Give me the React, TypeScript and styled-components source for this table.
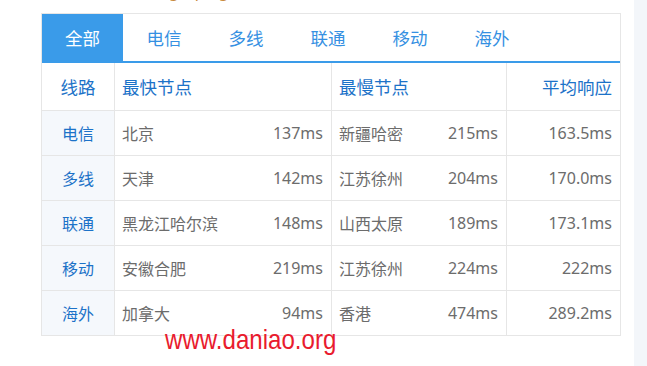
import React from 'react';
import styled, {createGlobalStyle} from 'styled-components';

const GlobalStyle = createGlobalStyle`
  html, body {
    margin: 0;
    padding: 0;
    background: #fff;
    overflow: hidden;
  }
  body {
    font-family: "Noto Sans", "Noto Sans CJK SC", sans-serif;
  }
`;

const Page = styled.div`
  display: flex;
  width: 647px;
  height: 366px;
  position: relative;
`;

const Main = styled.div`
  width: 634px;
  padding-left: 41px;
  box-sizing: border-box;
`;

const SideStrip = styled.div`
  flex: 1;
  background: #f3f6fa;
`;

const NoticeClip = styled.div`
  height: 13px;
  overflow: hidden;
  position: relative;
`;

const NoticeText = styled.div`
  position: absolute;
  left: 128px;
  top: -19px;
  font-size: 16px;
  line-height: 20px;
  color: #c8893c;
  white-space: nowrap;
  font-family: "Noto Sans", "Noto Sans CJK SC", sans-serif;
`;

const Panel = styled.div`
  width: 580px;
  box-sizing: border-box;
  border: 1px solid #e6e6e6;
  border-bottom: none;
`;

const TabBar = styled.div`
  display: flex;
  height: 47px;
  border-bottom: 2px solid #3a9be9;
`;

const Tab = styled.div<{$active?: boolean}>`
  width: ${p => (p.$active ? '81px' : '82px')};
  display: flex;
  align-items: center;
  justify-content: center;
  font-size: 17.5px;
  color: ${p => (p.$active ? '#fff' : '#3590e2')};
  background: ${p => (p.$active ? '#3a9be9' : 'transparent')};
`;

const Grid = styled.div`
  display: grid;
  grid-template-columns: 73px 217px 175px 1fr;
`;

const Cell = styled.div<{$head?: boolean; $first?: boolean; $last?: boolean; $right?: boolean}>`
  height: ${p => (p.$head ? '47px' : '44px')};
  border-bottom: 1px solid #e6e6e6;
  border-right: ${p => (p.$last ? 'none' : '1px solid #e6e6e6')};
  display: flex;
  align-items: center;
  justify-content: ${p => (p.$first ? 'center' : p.$right ? 'flex-end' : 'space-between')};
  padding: ${p => (p.$first ? '0' : '0 8px 0 7px')};
  background: ${p => (p.$first && !p.$head ? '#f5f8fc' : '#fff')};
  color: ${p => (p.$head || p.$first ? '#1c72c8' : '#6c6c6c')};
  font-size: ${p => (p.$head ? '17.5px' : '16px')};
  white-space: nowrap;
`;

const Watermark = styled.div`
  position: absolute;
  left: 165px;
  top: 324px;
  font-family: "Liberation Sans", Arial, sans-serif;
  font-size: 28px;
  color: #e91b2e;
  transform: scaleX(0.86);
  transform-origin: left top;
  white-space: nowrap;
`;

const tabs = ['全部', '电信', '多线', '联通', '移动', '海外'];

const rows = [
  {line: '电信', fast: '北京', fastMs: '137ms', slow: '新疆哈密', slowMs: '215ms', avg: '163.5ms'},
  {line: '多线', fast: '天津', fastMs: '142ms', slow: '江苏徐州', slowMs: '204ms', avg: '170.0ms'},
  {line: '联通', fast: '黑龙江哈尔滨', fastMs: '148ms', slow: '山西太原', slowMs: '189ms', avg: '173.1ms'},
  {line: '移动', fast: '安徽合肥', fastMs: '219ms', slow: '江苏徐州', slowMs: '224ms', avg: '222ms'},
  {line: '海外', fast: '加拿大', fastMs: '94ms', slow: '香港', slowMs: '474ms', avg: '289.2ms'},
];

const App: React.FC = () => {
  return (
    <>
      <GlobalStyle />
      <Page>
        <Main>
          <NoticeClip>
            <NoticeText>g，ping值，丢包率，响应时间，测试节点，平均响应</NoticeText>
          </NoticeClip>
          <Panel>
            <TabBar>
              {tabs.map((t, i) => (
                <Tab key={t} $active={i === 0}>{t}</Tab>
              ))}
            </TabBar>
            <Grid>
              <Cell $head $first>线路</Cell>
              <Cell $head>最快节点</Cell>
              <Cell $head>最慢节点</Cell>
              <Cell $head $last $right>平均响应</Cell>
              {rows.map(r => (
                <React.Fragment key={r.line}>
                  <Cell $first>{r.line}</Cell>
                  <Cell>
                    <span>{r.fast}</span>
                    <span>{r.fastMs}</span>
                  </Cell>
                  <Cell>
                    <span>{r.slow}</span>
                    <span>{r.slowMs}</span>
                  </Cell>
                  <Cell $last $right>{r.avg}</Cell>
                </React.Fragment>
              ))}
            </Grid>
          </Panel>
        </Main>
        <SideStrip />
        <Watermark>www.daniao.org</Watermark>
      </Page>
    </>
  );
};

export default App;
